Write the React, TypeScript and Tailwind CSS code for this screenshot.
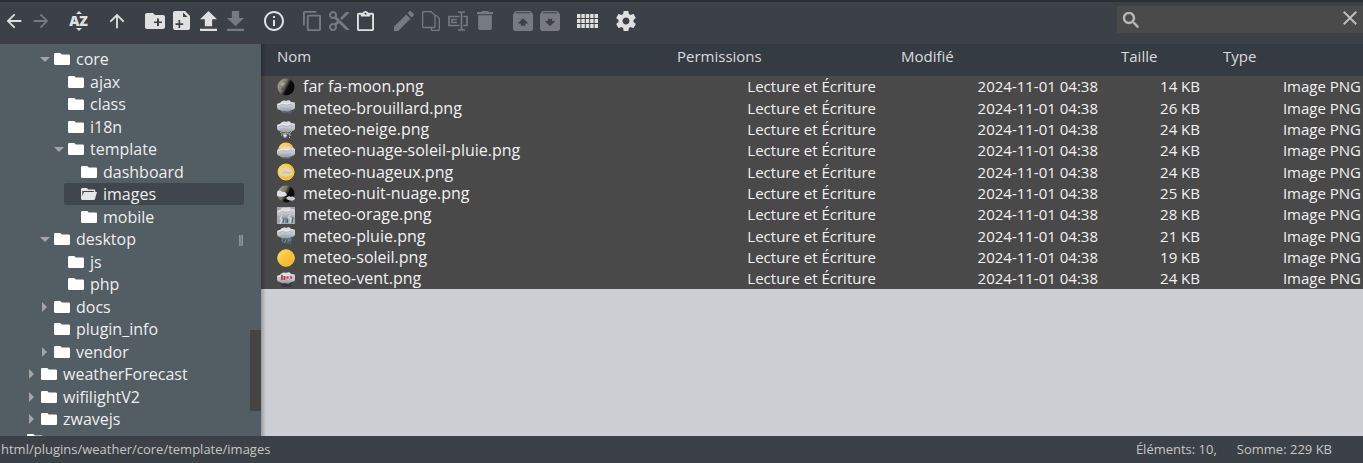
import type { ReactNode } from 'react';
import {
  MdArrowBack,
  MdArrowForward,
  MdArrowUpward,
} from 'react-icons/md';

type GlyphProps = { box: string; size: string; children: ReactNode };

function Glyph({ box, size, children }: GlyphProps) {
  return (
    <svg viewBox={box} className={size} fill="currentColor" preserveAspectRatio="none" aria-hidden="true">
      {children}
    </svg>
  );
}

function SortGlyph() {
  return (
    <span className="flex flex-col items-center gap-px">
      <Glyph box="0 0 6 3" size="h-[3px] w-[6px]"><path d="M0 3L3 0l3 3z" /></Glyph>
      <span className="text-[14px] leading-[12px] font-extrabold">AZ</span>
      <Glyph box="0 0 6 3" size="h-[3px] w-[6px]"><path d="M0 0l3 3 3-3z" /></Glyph>
    </span>
  );
}

type Tool = { label: string; icon: ReactNode; off?: boolean };

const groups: Tool[][] = [
  [
    { label: 'Précédent', icon: <MdArrowBack className="size-[22px]" /> },
    { label: 'Suivant', icon: <MdArrowForward className="size-[22px]" />, off: true },
  ],
  [{ label: 'Trier', icon: <SortGlyph /> }],
  [{ label: 'Dossier parent', icon: <MdArrowUpward className="size-[22px]" /> }],
  [
    {
      label: 'Nouveau dossier',
      icon: (
        <Glyph box="2 4 20 16" size="h-4 w-5">
          <path d="M20 6h-8l-2-2H4c-1.110 0-1.990.89-1.990 2L2 18c0 1.110.89 2 2 2h16c1.110 0 2-.89 2-2V8c0-1.110-.89-2-2-2zm-1 8h-3v3h-2v-3h-3v-1.500h3v-3h2v3h3v1.500z" />
        </Glyph>
      ),
    },
    {
      label: 'Nouveau fichier',
      icon: (
        <Glyph box="0 0 17 19" size="h-[19px] w-[17px]">
          <path fillRule="evenodd" d="M2 0h10l5 5v12a2 2 0 0 1-2 2H2a2 2 0 0 1-2-2V2a2 2 0 0 1 2-2zM10 1.500v4.500h4.500zM5.500 9v3.200H2.500v1.700h3V17h1.700v-3.100h3v-1.700h-3V9z" />
        </Glyph>
      ),
    },
    {
      label: 'Envoyer',
      icon: <Glyph box="5 3 14 17" size="h-5 w-[17px]"><path d="M9 16h6v-6h4l-7-7-7 7h4zm-4 2h14v2H5z" /></Glyph>,
    },
    {
      label: 'Télécharger',
      off: true,
      icon: <Glyph box="5 3 14 17" size="h-5 w-[17px]"><path d="M19 9h-4V3H9v6H5l7 7 7-7zM5 18v2h14v-2H5z" /></Glyph>,
    },
  ],
  [
    {
      label: 'Informations',
      icon: (
        <Glyph box="2 2 20 20" size="size-5">
          <path d="M11 17h2v-6h-2v6zm1-15C6.480 2 2 6.480 2 12s4.480 10 10 10 10-4.480 10-10S17.520 2 12 2zm0 18c-4.410 0-8-3.590-8-8s3.590-8 8-8 8 3.590 8 8-3.590 8-8 8zM11 9h2V7h-2v2z" />
        </Glyph>
      ),
    },
  ],
  [
    {
      label: 'Copier',
      off: true,
      icon: (
        <Glyph box="2 1 19 22" size="h-5 w-[18px]">
          <path d="M16 1H4c-1.100 0-2 .9-2 2v14h2V3h12V1zm3 4H8c-1.100 0-2 .9-2 2v14c0 1.100.9 2 2 2h11c1.100 0 2-.9 2-2V7c0-1.100-.9-2-2-2zm0 16H8V7h11v14z" />
        </Glyph>
      ),
    },
    {
      label: 'Couper',
      off: true,
      icon: (
        <Glyph box="2 2 20 20" size="size-5">
          <path d="M9.640 7.640c.23-.5.36-1.050.36-1.640 0-2.210-1.790-4-4-4S2 3.790 2 6s1.790 4 4 4c.59 0 1.140-.13 1.640-.36L10 12l-2.360 2.360C7.140 14.130 6.590 14 6 14c-2.210 0-4 1.790-4 4s1.790 4 4 4 4-1.790 4-4c0-.59-.13-1.140-.36-1.640L12 14l7 7h3v-1L9.640 7.640zM6 8c-1.100 0-2-.89-2-2s.9-2 2-2 2 .89 2 2-.9 2-2 2zm0 12c-1.100 0-2-.89-2-2s.9-2 2-2 2 .89 2 2-.9 2-2 2zm6-7.500c-.28 0-.5-.22-.5-.5s.22-.5.5-.5.5.22.5.5-.22.5-.5.5zM19 3l-6 6 2 2 7-7V3z" />
        </Glyph>
      ),
    },
    {
      label: 'Coller',
      icon: (
        <Glyph box="3 0 18 22" size="h-5 w-[17px]">
          <path d="M19 2h-4.180C14.400.84 13.300 0 12 0c-1.300 0-2.400.84-2.820 2H5c-1.100 0-2 .9-2 2v16c0 1.100.9 2 2 2h14c1.100 0 2-.9 2-2V4c0-1.100-.9-2-2-2zm-7 0c.55 0 1 .45 1 1s-.45 1-1 1-1-.45-1-1 .45-1 1-1zm7 18H5V4h2v2h10V4h2v16z" />
        </Glyph>
      ),
    },
  ],
  [
    {
      label: 'Éditer',
      off: true,
      icon: (
        <Glyph box="3 3 18 18" size="size-5">
          <path d="M3 17.250V21h3.750L17.810 9.940l-3.750-3.750L3 17.250zM20.710 7.040c.39-.39.39-1.020 0-1.410l-2.340-2.340c-.39-.39-1.020-.39-1.410 0l-1.830 1.830 3.750 3.750 1.830-1.830z" />
        </Glyph>
      ),
    },
    {
      label: 'Dupliquer',
      off: true,
      icon: (
        <Glyph box="0 0 18 20" size="h-5 w-[18px]">
          <path fill="none" stroke="currentColor" strokeWidth="1.300" d="M1.500.6h7.700l3.800 3.800v11.200a.9.900 0 0 1-.9.900H1.500a.9.900 0 0 1-.9-.9V1.500a.9.900 0 0 1 .9-.9zM13 4.400h1.300l3 3v11.100a.9.900 0 0 1-.9.900H10.300a.9.900 0 0 1-.9-.9v-2" />
        </Glyph>
      ),
    },
    {
      label: 'Renommer',
      off: true,
      icon: (
        <Glyph box="0 0 20 20" size="size-5">
          <path fill="none" stroke="currentColor" strokeWidth="1.700" d="M11.500 5.500H1v9h10.500M15.500 5.500H19v9h-3.500M10 1h2.500l1 1 1-1H17M10 19h2.500l1-1 1 1H17M13.500 2v16M3.500 8.500H9M3.500 11.500H9M4 8v4" />
        </Glyph>
      ),
    },
    {
      label: 'Supprimer',
      off: true,
      icon: (
        <Glyph box="5 3 14 18" size="h-[19px] w-4">
          <path d="M6 19c0 1.100.9 2 2 2h8c1.100 0 2-.9 2-2V7H6v12zM19 4h-3.500l-1-1h-5l-1 1H5v2h14V4z" />
        </Glyph>
      ),
    },
  ],
  [
    {
      label: 'Extraire',
      off: true,
      icon: (
        <Glyph box="3 3 18 18" size="size-5">
          <path d="M20.550 5.220l-1.390-1.680C18.880 3.210 18.470 3 18 3H6c-.47 0-.88.21-1.150.55L3.460 5.220C3.170 5.570 3 6.010 3 6.500V19c0 1.100.89 2 2 2h14c1.100 0 2-.9 2-2V6.500c0-.49-.17-.93-.45-1.280zM12 9.500l4.800 4.800H14v2h-4v-2H7.200L12 9.500zM5.120 5l.82-.8h12l.93.8H5.120z" />
        </Glyph>
      ),
    },
    {
      label: 'Archiver',
      off: true,
      icon: (
        <Glyph box="3 3 18 18" size="size-5">
          <path d="M20.540 5.230l-1.390-1.680C18.880 3.210 18.470 3 18 3H6c-.47 0-.88.21-1.160.55L3.460 5.230C3.170 5.570 3 6.020 3 6.500V19c0 1.100.9 2 2 2h14c1.100 0 2-.9 2-2V6.500c0-.48-.17-.93-.46-1.270zM12 16.800L7.200 12H10v-2h4v2h2.800L12 16.800zM5.120 5l.81-.8h12l.94.800H5.120z" />
        </Glyph>
      ),
    },
  ],
  [
    {
      label: 'Affichage en icônes',
      icon: (
        <Glyph box="0 0 21 14" size="h-[14px] w-[21px]">
          {[0, 5, 10].map((y) =>
            [0, 4.4, 8.8, 13.2, 17.6].map((x) => <rect key={`${x}-${y}`} x={x} y={y} width="3.400" height="4" />),
          )}
        </Glyph>
      ),
    },
  ],
  [
    {
      label: 'Préférences',
      icon: (
        <Glyph box="2 2 20 20" size="size-5">
          <path d="M19.430 12.980c.04-.32.07-.64.07-.98s-.03-.66-.07-.98l2.110-1.650c.19-.15.24-.42.12-.64l-2-3.460c-.12-.22-.39-.3-.61-.22l-2.490 1c-.52-.4-1.080-.73-1.690-.98l-.38-2.650C14.460 2.180 14.250 2 14 2h-4c-.25 0-.46.18-.49.42l-.38 2.650c-.61.25-1.170.59-1.690.98l-2.490-1c-.23-.09-.49 0-.61.22l-2 3.460c-.13.22-.07.49.12.64l2.110 1.650c-.04.32-.07.65-.07.98s.03.66.07.98l-2.110 1.650c-.19.15-.24.42-.12.64l2 3.460c.12.22.39.3.61.22l2.490-1c.52.4 1.080.73 1.690.98l.38 2.650c.03.24.24.42.49.42h4c.25 0 .46-.18.49-.42l.38-2.650c.61-.25 1.170-.59 1.690-.98l2.490 1c.23.09.49 0 .61-.22l2-3.460c.12-.22.07-.49-.12-.64l-2.110-1.650zM12 15.500c-1.930 0-3.500-1.570-3.500-3.500s1.570-3.500 3.500-3.500 3.500 1.570 3.500 3.500-1.570 3.500-3.500 3.500z" />
        </Glyph>
      ),
    },
  ],
];

function Toolbar() {
  return (
    <header className="flex h-11 shrink-0 items-start justify-between border-t-2 border-[#2b2e33] bg-[#3c4047]">
      <div role="toolbar" aria-label="Outils" className="flex gap-[11px]">
        {groups.map((group) => (
          <div key={group[0].label} className="flex">
            {group.map((tool) => (
              <button
                key={tool.label}
                type="button"
                aria-label={tool.label}
                disabled={tool.off}
                className="flex h-[37px] w-[27px] items-center justify-center text-[#e0e0e0] disabled:text-[#777a7e]"
              >
                {tool.icon}
              </button>
            ))}
          </div>
        ))}
      </div>
      <form role="search" className="mt-1 flex h-[27px] w-[246px] items-center bg-[#4a4a4a] pr-[6px] pl-[6px] text-[#bdbdbd]">
        <Glyph box="3 3 17.500 17.500" size="size-4">
          <path stroke="currentColor" strokeWidth="0.600" d="M15.500 14h-.79l-.28-.27C15.410 12.590 16 11.110 16 9.500 16 5.910 13.090 3 9.500 3S3 5.910 3 9.500 5.910 16 9.500 16c1.610 0 3.090-.59 4.230-1.570l.27.28v.79l5 4.990L20.490 19l-4.990-5zm-6 0C7.010 14 5 11.990 5 9.500S7.010 5 9.500 5 14 7.010 14 9.500 11.990 14 9.500 14z" />
        </Glyph>
        <input aria-label="Rechercher" className="min-w-0 flex-1 bg-transparent px-2 text-sm outline-none" />
        <button type="button" aria-label="Effacer" className="pb-1">
          <Glyph box="5 5 14 14" size="size-[14px]">
            <path d="M19 6.410L17.590 5 12 10.590 6.410 5 5 6.410 10.590 12 5 17.590 6.410 19 12 13.410 17.590 19 19 17.590 13.410 12z" />
          </Glyph>
        </button>
      </form>
    </header>
  );
}

type Node = { name: string; level: number; state?: 'open' | 'closed'; current?: boolean };

const tree: Node[] = [
  { name: 'core', level: 1, state: 'open' },
  { name: 'ajax', level: 2 },
  { name: 'class', level: 2 },
  { name: 'i18n', level: 2 },
  { name: 'template', level: 2, state: 'open' },
  { name: 'dashboard', level: 3 },
  { name: 'images', level: 3, current: true },
  { name: 'mobile', level: 3 },
  { name: 'desktop', level: 1, state: 'open' },
  { name: 'js', level: 2 },
  { name: 'php', level: 2 },
  { name: 'docs', level: 1, state: 'closed' },
  { name: 'plugin_info', level: 1 },
  { name: 'vendor', level: 1, state: 'closed' },
  { name: 'weatherForecast', level: 0, state: 'closed' },
  { name: 'wifilightV2', level: 0, state: 'closed' },
  { name: 'zwavejs', level: 0, state: 'closed' },
];

const indents = ['ml-6', 'ml-[37px]', 'ml-[51px]', 'ml-[64px]'];

function FolderGlyph({ open }: { open?: boolean }) {
  return (
    <Glyph box="0 0 16 12" size="h-3 w-4 shrink-0">
      {open ? (
        <path fillRule="evenodd" d="M1.500 0h4.300l1.500 1.500H13a1.300 1.300 0 0 1 1.300 1.300V4H16l-2 7a1.300 1.300 0 0 1-1.300 1H1.500A1.400 1.400 0 0 1 0 10.600V1.400A1.400 1.400 0 0 1 1.500 0zM1.300 3v5L3 4h9.800V3z" />
      ) : (
        <path d="M1.300 0h5l1.500 1.500h6.900A1.300 1.300 0 0 1 16 2.800v7.900a1.300 1.300 0 0 1-1.300 1.300H1.300A1.300 1.300 0 0 1 0 10.700V1.300A1.300 1.300 0 0 1 1.300 0z" />
      )}
    </Glyph>
  );
}

function Sidebar() {
  return (
    <nav aria-label="Dossiers" className="relative w-[261px] shrink-0 overflow-hidden bg-[#525d64] pt-1">
      <ul>
        {tree.map((node) => (
          <li key={node.name} className="flex odd:h-[22px] even:h-[23px]">
            <a
              href="#"
              aria-current={node.current ? 'page' : undefined}
              className={`${indents[node.level]} mr-[17px] flex flex-1 items-center rounded-xs text-[16px] leading-[22px] text-[#eeeeee] aria-[current=page]:bg-[#40464d]`}
            >
              <span className="flex w-[17px] shrink-0 justify-center pr-[2px] text-[#a5a5a5]">
                {node.state === 'open' && <Glyph box="0 0 10 5" size="h-[5px] w-[10px]"><path d="M0 0h10L5 5z" /></Glyph>}
                {node.state === 'closed' && <Glyph box="0 0 5 10" size="h-[10px] w-[5px]"><path d="M0 0v10l5-5z" /></Glyph>}
              </span>
              <span className={node.current ? 'text-[#e6e6e6]' : 'text-white'}>
                <FolderGlyph open={node.current} />
              </span>
              <span className="pl-[6px]">{node.name}</span>
            </a>
          </li>
        ))}
        <li aria-hidden="true" className="flex pt-1 pl-[27px] text-white">
          <FolderGlyph />
        </li>
      </ul>
      <span className="absolute top-[191px] left-[239px] h-[11px] w-1 border-x border-[#8d9295] bg-[#7c8286]" />
      <span className="absolute top-[286px] right-0 h-[81px] w-[11px] bg-[#444444]" />
    </nav>
  );
}

type Sky = 'moon' | 'fog' | 'snow' | 'sunrain' | 'cloudy' | 'night' | 'storm' | 'rain' | 'sun' | 'wind';

const files: { name: string; size: string; sky: Sky }[] = [
  { name: 'far fa-moon.png', size: '14 KB', sky: 'moon' },
  { name: 'meteo-brouillard.png', size: '26 KB', sky: 'fog' },
  { name: 'meteo-neige.png', size: '24 KB', sky: 'snow' },
  { name: 'meteo-nuage-soleil-pluie.png', size: '24 KB', sky: 'sunrain' },
  { name: 'meteo-nuageux.png', size: '24 KB', sky: 'cloudy' },
  { name: 'meteo-nuit-nuage.png', size: '25 KB', sky: 'night' },
  { name: 'meteo-orage.png', size: '28 KB', sky: 'storm' },
  { name: 'meteo-pluie.png', size: '21 KB', sky: 'rain' },
  { name: 'meteo-soleil.png', size: '19 KB', sky: 'sun' },
  { name: 'meteo-vent.png', size: '24 KB', sky: 'wind' },
];

function SkyGradients() {
  return (
    <svg className="absolute size-0" aria-hidden="true">
      <defs>
        <linearGradient id="moon" x1="0" y1="0.200" x2="1" y2="0.700">
          <stop offset="0" stopColor="#aaa69a" />
          <stop offset="0.400" stopColor="#77746b" />
          <stop offset="0.620" stopColor="#0d0d0d" />
          <stop offset="1" stopColor="#050505" />
        </linearGradient>
        <linearGradient id="sun" x1="0" y1="0" x2="1" y2="1">
          <stop offset="0" stopColor="#ffe070" />
          <stop offset="0.500" stopColor="#fdbf35" />
          <stop offset="1" stopColor="#f9b02a" />
        </linearGradient>
        <linearGradient id="cloud" x1="0" y1="0" x2="0" y2="1">
          <stop offset="0" stopColor="#dfe1e6" />
          <stop offset="0.650" stopColor="#bfc1c8" />
          <stop offset="1" stopColor="#8d929b" />
        </linearGradient>
      </defs>
    </svg>
  );
}

function Cloud({ y }: { y: number }) {
  return (
    <g transform={`translate(0 ${y})`}>
      <path d="M0 4c1-1 2-1 3-1 1-2 4-3 6-2 2-1 4-1 5 1 2 0 3 0 4 1v5c-1 2-3 2-4 2-1 2-5 2-6 1-2 1-4 0-5-1-2 0-3-1-3-3z" fill="url(#cloud)" />
      <path d="M1 6c2-1 3 0 4-2 1 2 3 0 4 2 2-2 3 0 4-2l3 2M3 8c2 1 3-1 5 0s4 0 6-1" fill="none" stroke="#9698a1" strokeWidth="0.700" opacity="0.600" />
      <path d="M1 5c2-1 3-1 5-2l4 1 3-1" fill="none" stroke="#f5f6fa" strokeWidth="0.700" />
    </g>
  );
}

function SkyIcon({ sky }: { sky: Sky }) {
  const shapes: Record<Sky, ReactNode> = {
    moon: (
      <>
        <circle cx="9" cy="9" r="8.500" fill="url(#moon)" />
        <path d="M3 6l3-2 2 2-3 2z" fill="#c2beb0" opacity="0.600" />
        <circle cx="6" cy="11" r="1.500" fill="#55534d" opacity="0.700" />
      </>
    ),
    fog: (
      <>
        <path d="M3 10h13l-2 5-9-1z" fill="#5d6978" opacity="0.600" />
        <Cloud y={1} />
      </>
    ),
    snow: (
      <>
        <Cloud y={0} />
        <path d="M3 11l3 2 3-1 3 1 3-3" fill="none" stroke="#a5a8b0" />
        <path d="M8 12.500v4.500M5.800 14.700h4.400M6.500 13.200l3 3M9.500 13.200l-3 3" stroke="#f4f4f8" strokeWidth="0.800" />
        <path d="M12 14h2M4 14h1M12 16.500h1" stroke="#c4c8d0" />
      </>
    ),
    sunrain: (
      <>
        <circle cx="9" cy="8.500" r="8" fill="url(#sun)" />
        <path d="M4 12h11l-2 5H6z" fill="#4f6472" />
        <Cloud y={4} />
      </>
    ),
    cloudy: (
      <>
        <circle cx="9" cy="9" r="8" fill="url(#sun)" stroke="#ecd84f" />
        <path d="M2 10c0-3 2-5 5-5 3-2 6-1 7 1 2 1 3 4 1 6-3 2-7 2-10 1-2 0-3-1-3-3z" fill="#ddd6bd" opacity="0.850" />
        <path d="M5 10l3-1 3 1 3-1" fill="none" stroke="#b5b09a" strokeWidth="0.700" />
      </>
    ),
    night: (
      <>
        <circle cx="9" cy="9" r="8.500" fill="url(#moon)" />
        <path d="M0 7c1-2 4-2 5 0 3-1 4 1 5 3-2 2-6 2-10 1z" fill="#dfe0e5" />
        <path d="M9 13c2-2 4-2 5-1 2-1 4 0 4 2-2 3-7 2-9-1z" fill="#c8cad0" />
      </>
    ),
    storm: (
      <>
        <rect y="1" width="18" height="17" fill="#a3a9b1" />
        <Cloud y={1} />
        <path d="M5 9l-2 4h2l-2 5M13 9l-2 3h3l-1 5" fill="none" stroke="#dfe3ea" />
        <path d="M7 12l-1 5M9 12v5M10.500 13v4M16 11l-1 6" stroke="#4e5f70" />
      </>
    ),
    rain: (
      <>
        <path d="M3 9h13l-2 8-9-1z" fill="#4d5f70" />
        <path d="M6 12l-1 2M9 12l-1 3M12 12l-1 3M8 15l-1 1M14 12l-1 2" stroke="#71879a" />
        <Cloud y={0} />
      </>
    ),
    sun: <circle cx="9" cy="9" r="8.300" fill="url(#sun)" stroke="#ecd84f" />,
    wind: (
      <>
        <path d="M3 12h12l-1 5H5z" fill="#35373b" />
        <Cloud y={2} />
        <path d="M5 5v5M7.500 6v4" stroke="#c22b34" strokeWidth="1.600" fill="none" />
        <path d="M9.500 7.500h2M13 7.500h2" stroke="#cf4a50" strokeWidth="2.500" />
      </>
    ),
  };
  return <svg viewBox="0 0 18 18" className="size-[18px] shrink-0" aria-hidden="true">{shapes[sky]}</svg>;
}

function FileList() {
  return (
    <main className="relative min-w-0 flex-1 overflow-hidden bg-[#cecfd4]">
      <SkyGradients />
      <table className="relative w-full table-fixed border-collapse bg-[#494949] text-right text-[15px] leading-[21px] whitespace-nowrap text-[#f2f2f2]">
        <thead className="bg-[#353b43] text-left text-[#dcdcdc]">
          <tr className="h-8">
            <th scope="col" className="p-0 pb-2 pl-4 font-normal">Nom</th>
            <th scope="col" className="w-[224px] p-0 pb-2 pl-4 font-normal">Permissions</th>
            <th scope="col" className="w-[220px] p-0 pb-2 pl-4 font-normal">Modifié</th>
            <th scope="col" className="w-[102px] p-0 pb-2 pl-4 font-normal">Taille</th>
            <th scope="col" className="w-[156px] p-0 pb-2 pl-4 font-normal">Type</th>
          </tr>
        </thead>
        <tbody>
          {files.map((file) => (
            <tr key={file.name} className="h-[21px] nth-[3n+2]:h-[22px]">
              <td className="p-0 pl-4">
                <span className="flex items-center gap-2 text-[16px]">
                  <SkyIcon sky={file.sky} />
                  {file.name}
                </span>
              </td>
              <td className="p-0 pr-[9px]">Lecture et Écriture</td>
              <td className="p-0 pr-[7px]">2024-11-01 04:38</td>
              <td className="p-0 pr-[7px]">{file.size}</td>
              <td className="p-0 pr-[2px]">Image PNG</td>
            </tr>
          ))}
        </tbody>
      </table>
      <span className="absolute inset-y-0 left-0 w-[5px] bg-linear-to-r from-black/25 to-transparent" />
    </main>
  );
}

export default function App() {
  return (
    <div className="flex h-screen flex-col overflow-hidden bg-[#3c4047] font-['Open_Sans','Noto_Sans',sans-serif]">
      <Toolbar />
      <div className="flex min-h-0 flex-1">
        <Sidebar />
        <FileList />
      </div>
      <footer className="flex h-[27px] shrink-0 items-center justify-between pt-px pr-[31px] pl-px text-[13px] text-[#c6c6c6]">
        <span>html/plugins/weather/core/template/images</span>
        <span className="flex gap-5">
          <span>Éléments: 10,</span>
          <span>Somme: 229 KB</span>
        </span>
      </footer>
    </div>
  );
}
